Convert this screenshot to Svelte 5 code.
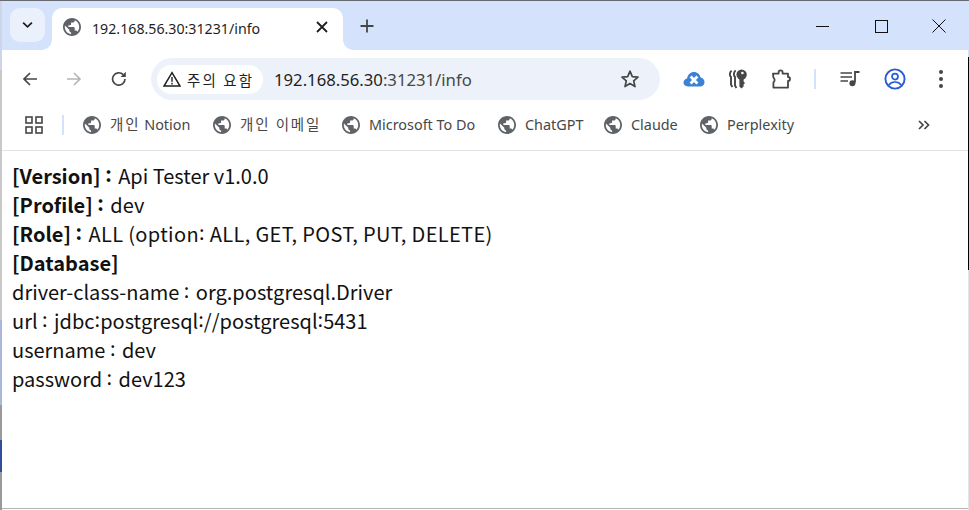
<script>
  const bookmarks = [
    { ko: '개인', label: ' Notion', width: 130 },
    { ko: '개인 이메일', label: '', width: 129 },
    { ko: '', label: 'Microsoft To Do', width: 156 },
    { ko: '', label: 'ChatGPT', width: 106 },
    { ko: '', label: 'Claude', width: 96 },
    { ko: '', label: 'Perplexity', width: 110 }
  ];

  const lines = [
    { key: '[Version]', value: 'Api Tester v1.0.0' },
    { key: '[Profile]', value: 'dev' },
    { key: '[Role]', value: 'ALL (option: ALL, GET, POST, PUT, DELETE)', spaced: true }
  ];

  const plain = [
    { key: 'driver-class-name', value: 'org.postgresql.Driver' },
    { key: 'url', value: 'jdbc:postgresql://postgresql:5431' },
    { key: 'username', value: 'dev' },
    { key: 'password', value: 'dev123' }
  ];

  // colons sit higher in the original font, so each one gets its own span
  const chunks = (text) => text.split(':');
</script>

{#snippet globe()}
  <svg class="globe" viewBox="2 2 20 20" width="18" height="18">
    <path fill="#5f6368" d="M12 2C6.48 2 2 6.48 2 12s4.48 10 10 10 10-4.48 10-10S17.52 2 12 2zm-1 17.93c-3.95-.49-7-3.85-7-7.93 0-.62.08-1.21.21-1.79L9 15v1c0 1.1.9 2 2 2v1.93zm6.9-2.54c-.26-.81-1-1.39-1.9-1.39h-1v-3c0-.55-.45-1-1-1H8v-2h2c.55 0 1-.45 1-1V7h2c1.1 0 2-.9 2-2v-.41c2.93 1.19 5 4.06 5 7.41 0 2.08-.8 3.97-2.1 5.39z" />
  </svg>
{/snippet}

{#snippet colons(text)}
  {#each chunks(text) as part, i}{#if i > 0}<span class="colon">:</span>{/if}{part}{/each}
{/snippet}

<div class="window">
  <div class="edge-left"></div>
  <div class="frame">
    <div class="tabstrip">
      <div class="tab-search">
        <svg viewBox="0 0 12 8" width="11" height="8"><path d="M1.2 1.4 L6 6 L10.8 1.4" fill="none" stroke="#1f1f1f" stroke-width="2" /></svg>
      </div>
      <div class="tab">
        {@render globe()}
        <span class="tab-title">192.168.56.30:31231/info</span>
        <svg class="tab-close" viewBox="0 0 12 12" width="12" height="12"><path d="M1 1 L11 11 M11 1 L1 11" stroke="#1f1f1f" stroke-width="1.8" /></svg>
      </div>
      <svg class="new-tab" viewBox="0 0 14 14" width="14" height="14"><path d="M7 0.5 V13.5 M0.5 7 H13.5" stroke="#444746" stroke-width="1.8" /></svg>
      <div class="caption">
        <svg viewBox="0 0 14 14" width="14" height="14"><path d="M0 7.5 H13" stroke="#111" stroke-width="1" /></svg>
        <svg viewBox="0 0 14 14" width="14" height="14"><rect x="1.5" y="1.5" width="12" height="12" fill="none" stroke="#111" stroke-width="1" /></svg>
        <svg viewBox="0 0 14 14" width="14" height="14"><path d="M0.5 0.5 L13.5 13.5 M13.5 0.5 L0.5 13.5" stroke="#111" stroke-width="1" /></svg>
      </div>
    </div>

    <div class="toolbar">
      <svg class="nav" viewBox="0 0 16 16" width="16" height="16"><path d="M15 8 H2 M8 2 L2 8 L8 14" fill="none" stroke="#444746" stroke-width="1.7" /></svg>
      <svg class="nav" viewBox="0 0 16 16" width="16" height="16"><path d="M1 8 H14 M8 2 L14 8 L8 14" fill="none" stroke="#b4b6b8" stroke-width="1.7" /></svg>
      <svg class="nav" viewBox="0 0 16 16" width="16" height="16"><path d="M14 8 A6.2 6.2 0 1 1 12.2 3.6" fill="none" stroke="#444746" stroke-width="1.7" /><path d="M14.8 0.8 V6 H9.6 Z" fill="#444746" /></svg>

      <div class="omnibox">
        <div class="chip">
          <svg viewBox="0 0 18 16" width="18" height="16"><path d="M9 1.6 L17 15 H1 Z" fill="none" stroke="#1f1f1f" stroke-width="1.5" /><path d="M9 6 V10.8 M9 11.8 V13.4" stroke="#1f1f1f" stroke-width="1.4" /></svg>
          <span>주의 요함</span>
        </div>
        <span class="url">192.168.56.30<span class="url-dim">:31231/info</span></span>
        <svg class="star" viewBox="0 0 20 20" width="20" height="20"><path d="M10 2.2 L12.3 7.6 L18 8.1 L13.7 11.9 L15 17.6 L10 14.6 L5 17.6 L6.3 11.9 L2 8.1 L7.7 7.6 Z" fill="none" stroke="#444746" stroke-width="1.7" stroke-linejoin="round" /></svg>
      </div>

      <div class="actions">
        <svg class="a-cloud" viewBox="0 0 22 16" width="22" height="16"><path d="M5 15.5 C2 15.5 0.5 13.6 0.5 11.6 C0.5 9.6 2 8 4 7.6 C4.6 3.6 7.6 1 11 1 C14.4 1 17 3.4 17.6 6.6 C20 7 21.5 9 21.5 11.2 C21.5 13.6 19.8 15.5 17 15.5 Z" fill="#3b82d6" /><path d="M7.6 5.6 L14.4 12.4 M14.4 5.6 L7.6 12.4" stroke="#fff" stroke-width="2.8" /></svg>
        <svg class="a-keys" viewBox="0 0 18 20" width="18" height="20">
          <path d="M2.6 1.6 C0.4 3.6 0.4 6.4 2 8 V15.4 L3.4 18" fill="none" stroke="#444746" stroke-width="1.9" />
          <path d="M6.6 1.4 C4.4 3.6 4.4 6.4 6 8 V16.4 L7.4 19" fill="none" stroke="#444746" stroke-width="1.9" />
          <circle cx="12.6" cy="5.6" r="5.2" fill="#444746" />
          <circle cx="13.4" cy="4" r="1.3" fill="#fff" />
          <path d="M10.4 9 H14.6 V12.6 L16 14 L14.6 15.4 V17.4 L12.4 19.6 L10.4 17.6 Z" fill="#444746" />
        </svg>
        <svg class="a-ext" viewBox="0 0 22 20" width="22" height="20"><path d="M2 4.6 H7.6 V3.4 A2 2 0 0 1 11.6 3.4 V4.6 H17 V8 A2 2 0 0 1 17 12 V18.6 H2.4 V13.4 A3 3 0 0 0 2.4 8.6 Z" fill="none" stroke="#444746" stroke-width="1.8" stroke-linejoin="round" /></svg>
        <div class="divider"></div>
        <svg class="a-music" viewBox="0 0 20 16" width="20" height="16"><path d="M0.5 2 H12 M0.5 6 H12 M0.5 10 H8" stroke="#444746" stroke-width="1.7" /><path d="M15 11.5 V1 H19.5" fill="none" stroke="#444746" stroke-width="1.8" /><circle cx="12.4" cy="12.2" r="3" fill="#444746" /></svg>
        <svg class="a-profile" viewBox="0 0 22 22" width="22" height="22"><circle cx="11" cy="11" r="9.6" fill="none" stroke="#2a5bd7" stroke-width="1.9" /><circle cx="11" cy="8.6" r="3" fill="none" stroke="#2a5bd7" stroke-width="1.7" /><path d="M4.8 17 C6.4 14.6 8.6 14 11 14 C13.4 14 15.6 14.6 17.2 17" fill="none" stroke="#2a5bd7" stroke-width="1.7" /></svg>
        <svg class="a-menu" viewBox="0 0 4 18" width="4" height="18"><circle cx="2" cy="2" r="2" fill="#444746" /><circle cx="2" cy="9" r="2" fill="#444746" /><circle cx="2" cy="16" r="2" fill="#444746" /></svg>
      </div>
    </div>

    <div class="bookmarks">
      <svg class="apps" viewBox="0 0 18 18" width="18" height="18">
        <rect x="1" y="1" width="6" height="6" fill="none" stroke="#444746" stroke-width="1.6" />
        <rect x="11" y="1" width="6" height="6" fill="none" stroke="#444746" stroke-width="1.6" />
        <rect x="1" y="11" width="6" height="6" fill="none" stroke="#444746" stroke-width="1.6" />
        <rect x="11" y="11" width="6" height="6" fill="none" stroke="#444746" stroke-width="1.6" />
      </svg>
      <div class="bm-divider"></div>
      {#each bookmarks as b}
        <div class="bookmark" style="width: {b.width}px">
          {@render globe()}
          <span class="bm-label"><span class="ko">{b.ko}</span>{b.label}</span>
        </div>
      {/each}
      <svg class="more" viewBox="0 0 12 10" width="12" height="10"><path d="M1 1 L5 5 L1 9 M6.5 1 L10.5 5 L6.5 9" fill="none" stroke="#444746" stroke-width="1.7" /></svg>
    </div>

    <main class="content">
      {#each lines as l}
        <div>
          <strong>{l.key} <span class="colon wide">:</span></strong>
          <span class:spaced={l.spaced}>{@render colons(l.value)}</span>
        </div>
      {/each}
      <div><strong>[Database]</strong></div>
      {#each plain as p}
        <div>{p.key} <span class="colon wide">:</span> {@render colons(p.value)}</div>
      {/each}
    </main>
  </div>
  <div class="edge-right"></div>
</div>

<style>
  :global(body) {
    margin: 0;
    background: #fff;
  }

  .window {
    width: 969px;
    height: 510px;
    display: flex;
    overflow: hidden;
    background: #fff;
  }

  .edge-left {
    width: 2px;
    flex: none;
    background: linear-gradient(
      #6a6e74 0 1px,
      #ccd6e6 1px 70px,
      #c8c8c8 70px 320px,
      #a9b8da 320px 405px,
      #999 405px 440px,
      #2f4f9c 440px 472px,
      #999 472px
    );
  }

  .edge-right {
    width: 1px;
    flex: none;
    background: linear-gradient(
      #6a6e74 0 1px,
      #d5e2fb 1px 57px,
      #000 57px 270px,
      #e3e3e3 270px
    );
  }

  .frame {
    flex: 1;
    min-width: 0;
    display: flex;
    flex-direction: column;
    box-sizing: border-box;
    margin-bottom: 1px;
    border-bottom: 1px solid #b4b4b4;
    font-family: "Noto Sans", "Noto Sans CJK KR", sans-serif;
  }

  .tabstrip {
    height: 50px;
    box-sizing: border-box;
    flex: none;
    display: flex;
    align-items: flex-start;
    background: #d5e2fb;
    border-top: 1px solid #666a70;
    padding: 7px 0 0 8px;
  }

  .tab-search {
    width: 35px;
    height: 34px;
    border-radius: 10px;
    background: #ebf1fc;
    display: flex;
    align-items: center;
    justify-content: center;
    flex: none;
  }

  .tab {
    position: relative;
    width: 291px;
    height: 42px;
    margin-left: 7px;
    box-sizing: border-box;
    padding: 0 15px 0 11px;
    background: #fff;
    border-radius: 10px 10px 0 0;
    display: flex;
    align-items: center;
    flex: none;
  }

  .tab::before,
  .tab::after {
    content: "";
    position: absolute;
    bottom: 0;
    width: 10px;
    height: 10px;
    background: radial-gradient(circle at 0 0, #d5e2fb 9.5px, #fff 10px);
  }

  .tab::before {
    left: -10px;
  }

  .tab::after {
    right: -10px;
    background: radial-gradient(circle at 100% 0, #d5e2fb 9.5px, #fff 10px);
  }

  .tab .globe {
    margin-top: -5px;
  }

  .tab-title {
    margin: -2px 0 0 11px;
    flex: 1;
    font: 14.2px "Noto Sans", sans-serif;
    color: #1f1f1f;
  }

  .tab-close {
    margin-top: -4px;
  }

  .new-tab {
    margin: 11px 0 0 17px;
    flex: none;
  }

  .caption {
    margin-left: auto;
    margin-top: 11px;
    display: flex;
    gap: 44px;
    padding-right: 22px;
  }

  .toolbar {
    height: 50px;
    flex: none;
    display: flex;
    align-items: center;
    background: #fff;
    border-radius: 10px 10px 0 0;
    padding: 8px 0 0 20px;
    box-sizing: border-box;
  }

  .nav {
    margin-right: 28px;
    flex: none;
  }

  .nav:nth-of-type(2) {
    margin-right: 29px;
  }

  .nav:nth-of-type(3) {
    margin-right: 24px;
  }

  .omnibox {
    width: 509px;
    height: 42px;
    box-sizing: border-box;
    background: #edf2fa;
    border-radius: 21px;
    display: flex;
    align-items: center;
    padding: 0 20px 0 6px;
    flex: none;
  }

  .chip {
    height: 29px;
    width: 106px;
    box-sizing: border-box;
    border-radius: 15px;
    background: #fff;
    display: flex;
    align-items: center;
    gap: 6px;
    padding-left: 6px;
    font: 14.5px "Noto Sans CJK KR", sans-serif;
    letter-spacing: 2.1px;
    white-space: nowrap;
    color: #1f1f1f;
  }

  .url {
    margin-left: 11px;
    flex: 1;
    font: 16.7px "Noto Sans", sans-serif;
    color: #1f1f1f;
  }

  .url-dim {
    color: #474747;
  }

  .actions {
    display: flex;
    align-items: center;
    margin-left: 23px;
  }

  .a-keys {
    margin-left: 24px;
  }

  .a-ext {
    margin-left: 24px;
  }

  .divider {
    width: 2px;
    height: 20px;
    background: #d3e3fd;
    margin-left: 21px;
  }

  .a-music {
    margin-left: 24px;
  }

  .a-profile {
    margin-left: 24px;
  }

  .a-menu {
    margin-left: 33px;
  }

  .bookmarks {
    height: 51px;
    flex: none;
    box-sizing: border-box;
    display: flex;
    align-items: center;
    border-bottom: 1px solid #e3e3e3;
    padding: 0 38px 1px 23px;
  }

  .apps {
    flex: none;
  }

  .bm-divider {
    width: 2px;
    height: 20px;
    background: #d3e3fd;
    margin: 0 19px;
    flex: none;
  }

  .bookmark {
    display: flex;
    align-items: center;
    gap: 9px;
    flex: none;
    font: 14.4px "Noto Sans", "Noto Sans CJK KR", sans-serif;
    color: #474747;
    white-space: nowrap;
  }

  .bm-label {
    margin-top: -2px;
  }

  .ko {
    font-family: "Noto Sans CJK KR", sans-serif;
    font-size: 14.5px;
    letter-spacing: 1.9px;
  }

  .more {
    margin-left: auto;
    flex: none;
  }

  .content {
    padding: 10px 0 0 10px;
    font-size: 20px;
    line-height: 29px;
    color: #111;
    font-family: "Noto Sans CJK KR", "Noto Sans", sans-serif;
  }

  .colon {
    position: relative;
    top: -2px;
  }

  .wide {
    margin-right: 2px;
  }

  .spaced {
    letter-spacing: 0.35px;
  }

  strong {
    font-weight: 700;
  }
</style>
